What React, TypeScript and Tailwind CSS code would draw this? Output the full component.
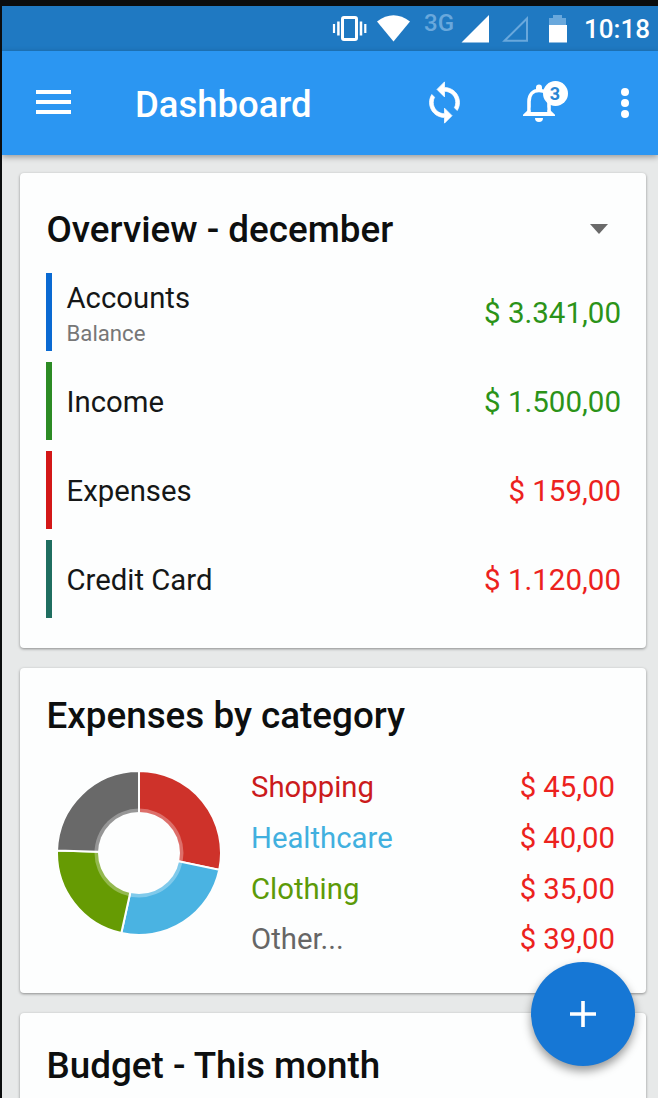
import type { ReactNode } from "react";

const overview = [
  { name: "Accounts", note: "Balance", amount: "$ 3.341,00", bar: "bg-[#0a6ad2]", color: "text-[#2b9318]" },
  { name: "Income", amount: "$ 1.500,00", bar: "bg-[#2c8b24]", color: "text-[#2b9318]" },
  { name: "Expenses", amount: "$ 159,00", bar: "bg-[#d31818]", color: "text-[#ec221d]" },
  { name: "Credit Card", amount: "$ 1.120,00", bar: "bg-[#1f6e60]", color: "text-[#ec221d]" },
];

const categories = [
  { name: "Shopping", amount: "$ 45,00", value: 45, color: "text-[#cb1b1c]", fill: "#ce322a" },
  { name: "Healthcare", amount: "$ 40,00", value: 40, color: "text-[#41b0df]", fill: "#4ab3e2" },
  { name: "Clothing", amount: "$ 35,00", value: 35, color: "text-[#5c9a08]", fill: "#669b03" },
  { name: "Other...", amount: "$ 39,00", value: 39, color: "text-[#666666]", fill: "#696969" },
];

function Card({ children, className }: { children: ReactNode; className: string }) {
  return (
    <section
      className={`shrink-0 rounded-[4px] bg-[#fdfefe] shadow-[0_1px_3px_rgba(0,0,0,0.4)] ${className}`}
    >
      {children}
    </section>
  );
}

function Title({ children }: { children: ReactNode }) {
  return <h2 className="text-[36.8px] leading-[42px] font-medium whitespace-nowrap text-[#0d0f0f]">{children}</h2>;
}

function StatusBar() {
  return (
    <div className="flex h-[45px] shrink-0 items-center justify-end bg-[#1f79c2] pr-2 text-white">
      <svg width="216" height="45" viewBox="332 6 216 45">
        <g fill="none" stroke="#fff">
          <rect x="342.500" y="17.500" width="14" height="22" rx="1.500" strokeWidth="3" />
          <path d="M338.400 21.500v14M361 21.500v14" strokeWidth="2.500" />
          <path d="M334 24v9M365.300 24v9" strokeWidth="2.200" />
        </g>
        <path d="M377 21.500Q393.500 9 410 21.500L393.500 41.500z" fill="#fff" />
        <text x="424" y="30.500" fontSize="24" fontWeight="500" fill="#69a8dc">3G</text>
        <path d="M461.500 42.500L489 15v27.500z" fill="#fff" />
        <path d="M504.500 40.800L527 18.500v22.300z" fill="none" stroke="#69a8dc" strokeWidth="2" />
      </svg>
      <svg width="20" height="45" viewBox="548 6 20 45" className="mr-[16px]">
        <path d="M549 25v-7h4v-3h9v3h4v7z" fill="#69a8dc" />
        <path d="M549 25h18v17.500h-18z" fill="#fff" />
      </svg>
      <time className="w-[66px] pt-[2px] text-[26px] leading-[45px] font-medium whitespace-nowrap">10:18</time>
    </div>
  );
}

function AppBar() {
  return (
    <header className="relative flex h-[104px] shrink-0 items-center bg-[#2b96f2] pl-[34px] text-white shadow-[0_2px_6px_rgba(0,0,0,0.35)]">
      <button aria-label="Menu" className="mb-[2px] flex w-[35px] flex-col gap-[6px]">
        <span className="h-1 bg-white" />
        <span className="h-1 bg-white" />
        <span className="h-1 bg-white" />
      </button>
      <h1 className="ml-[64px] flex-1 pt-[3px] text-[36.500px] leading-[42px] font-medium">Dashboard</h1>
      <button aria-label="Sync" className="mr-[50px] mb-[2px]">
        <svg width="45" height="45" viewBox="0 0 24 24" fill="#fff" stroke="#fff" strokeWidth="0.400">
          <path d="M12 4V1L8 5l4 4V6c3.310 0 6 2.690 6 6 0 1.010-.250 1.970-.700 2.800l1.460 1.460C19.540 15.030 20 13.570 20 12c0-4.420-3.580-8-8-8zm0 14c-3.310 0-6-2.690-6-6 0-1.010.250-1.970.700-2.800L5.240 7.740C4.460 8.970 4 10.430 4 12c0 4.420 3.580 8 8 8v3l4-4-4-4v3z" />
        </svg>
      </button>
      <button aria-label="Notifications" className="relative mr-[60px]">
        <svg width="44" height="44" viewBox="517 80.500 44 44" fill="none">
          <path d="M536 90v-3a3 3 0 0 1 6 0v3z" fill="#fff" />
          <path d="M529 114V101c0-7 4-11 10-11s10 4 10 11v13" stroke="#fff" strokeWidth="3.600" />
          <path d="M523 115.500v-1.200l5-4.800h22l5 4.800v1.200z" fill="#fff" />
          <path d="M530.800 107h16.400v4.500h-16.400z" fill="#2b96f2" />
          <path d="M535 117.500h8a4 4 0 0 1-8 0z" fill="#fff" />
        </svg>
        <span className="absolute top-0 left-[25.500px] flex size-[25px] items-center justify-center rounded-full bg-white text-[18px] leading-none font-bold text-[#2b86d3]">
          3
        </span>
      </button>
      <button aria-label="More" className="mr-[29px] mb-px flex flex-col gap-[3px]">
        <span className="size-2 rounded-full bg-white" />
        <span className="size-2 rounded-full bg-white" />
        <span className="size-2 rounded-full bg-white" />
      </button>
    </header>
  );
}

function Donut() {
  const total = categories.reduce((sum, c) => sum + c.value, 0);
  const point = (turn: number, r: number) =>
    `${(82 + r * Math.sin(turn * 2 * Math.PI)).toFixed(2)} ${(82 + r * Math.cos(turn * 2 * Math.PI) * -1).toFixed(2)}`;
  let start = 0;
  return (
    <svg width="164" height="164" viewBox="0 0 164 164" className="shrink-0">
      {categories.map((c) => {
        const from = start;
        start += c.value / total;
        return (
          <path
            key={c.name}
            d={`M82 82L${point(from, 82)}A82 82 0 0 1 ${point(start, 82)}Z`}
            fill={c.fill}
            stroke="#fdfefe"
            strokeWidth="2"
          />
        );
      })}
      <circle cx="82" cy="82" r="44.500" fill="#fff" fillOpacity="0.300" />
      <circle cx="82" cy="82" r="41" fill="#fdfefe" />
    </svg>
  );
}

export default function App() {
  return (
    <div className="relative flex h-[1098px] w-[658px] flex-col overflow-hidden border-t-[6px] border-l-2 border-[#0b0d0e] bg-[#e7e9e9] font-['Roboto',sans-serif]">
      <StatusBar />
      <AppBar />
      <main className="flex flex-col gap-5 pt-[17.500px] pr-3 pl-[18px]">
        <Card className="h-[475px] pt-[36.500px] pr-[25px] pl-[26.500px]">
          <div className="flex items-center justify-between pr-[13px]">
            <Title>Overview - december</Title>
            <svg width="18" height="10" viewBox="0 0 18 10" className="mb-[3px]">
              <path d="M0 0h18l-9 10z" fill="#6a6a6a" />
            </svg>
          </div>
          <ul className="-ml-[0.500px] mt-[22px] flex flex-col gap-[11px]">
            {overview.map((row) => (
              <li key={row.name} className="flex h-[78px] items-center">
                <span className={`h-full w-[6px] ${row.bar}`} />
                <div className="ml-[14.500px] flex-1 pt-[2px]">
                  <div className={`text-[29.300px] text-[#151717] ${row.note ? "pt-[3px] leading-[35px]" : "leading-[36px]"}`}>
                    {row.name}
                  </div>
                  {row.note && <div className="pt-px text-[22.200px] leading-[32px] text-[#777]">{row.note}</div>}
                </div>
                <span className={`pt-[2px] text-[29.500px] leading-[36px] ${row.color}`}>{row.amount}</span>
              </li>
            ))}
          </ul>
        </Card>
        <Card className="h-[325px] pt-[27.500px] pr-[31px] pl-[26.500px]">
          <Title>Expenses by category</Title>
          <div className="mt-[25px] flex">
            <div className="mt-[9px] ml-[10px]">
              <Donut />
            </div>
            <ul className="ml-[30.500px] flex-1 pt-px">
              {categories.map((c) => (
                <li key={c.name} className={`flex h-[50.600px] items-center justify-between text-[29.300px] ${c.color}`}>
                  <span>{c.name}</span>
                  <span className="text-[#ec221d]">{c.amount}</span>
                </li>
              ))}
            </ul>
          </div>
        </Card>
        <Card className="h-[325px] pt-[32.500px] pl-[26.500px]">
          <Title>Budget - This month</Title>
        </Card>
      </main>
      <button
        aria-label="Add"
        className="absolute top-[956px] left-[528.500px] flex size-[104px] items-center justify-center rounded-full bg-[#1677d5] shadow-[0_5px_10px_rgba(0,0,0,0.4)]"
      >
        <svg width="26" height="26" viewBox="0 0 26 26">
          <path d="M13 0v26M0 13h26" stroke="#fff" strokeWidth="3.600" />
        </svg>
      </button>
    </div>
  );
}
